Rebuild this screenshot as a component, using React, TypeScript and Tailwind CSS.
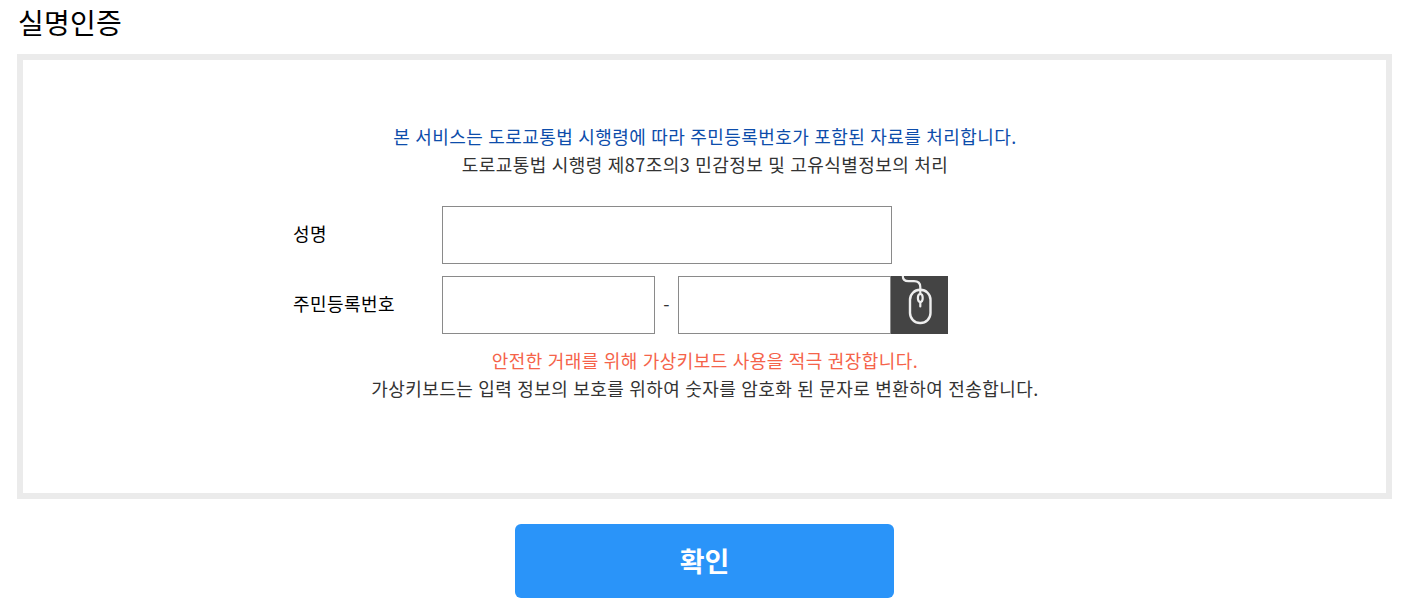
const inputClass = "h-[58px] border border-[#8a8a8a] bg-white px-3 outline-none";

function MouseIcon() {
  return (
    <svg width="57" height="58" viewBox="0 0 57 58" fill="none" stroke="#eee" strokeLinecap="round">
      <path d="M11.8 0C11.8 3.5 13.5 5.2 17.5 5.2H23C27.5 5.2 29.3 7 29.3 11V17" strokeWidth="2.2" />
      <rect x="19" y="13.8" width="20.5" height="33.2" rx="10" strokeWidth="2.4" />
      <ellipse cx="29.3" cy="22" rx="2.4" ry="4" strokeWidth="2.2" />
      <path d="M29.3 26V30.5" strokeWidth="2.2" />
    </svg>
  );
}

export default function App() {
  return (
    <main className="h-[609px] overflow-hidden bg-white pl-[17px] pr-[25px] font-['Noto_Sans_CJK_KR',sans-serif] text-[18px] leading-7 tracking-[0.44px] text-[#333] [word-spacing:0.55px]">
      <h1 className="h-[54px] pl-px pt-px text-[28px] leading-[42px] tracking-[0.25px] text-black">실명인증</h1>

      <section className="h-[445px] border-[6px] border-[#ebebeb] pt-[62px]">
        <div className="pl-px text-center">
          <p className="text-[#0d4dab]">본 서비스는 도로교통법 시행령에 따라 주민등록번호가 포함된 자료를 처리합니다.</p>
          <p>도로교통법 시행령 제87조의3 민감정보 및 고유식별정보의 처리</p>
        </div>

        <form className="ml-[270px] mt-7 flex flex-col gap-3">
          <div className="flex items-center">
            <label htmlFor="name" className="w-[149px] pb-1 text-black">성명</label>
            <input id="name" type="text" className={`${inputClass} w-[450px]`} />
          </div>
          <div className="flex items-center">
            <label htmlFor="idFront" className="w-[149px] pb-1 text-black">주민등록번호</label>
            <input id="idFront" type="text" className={`${inputClass} w-[213px]`} />
            <span className="w-[23px] pb-[5px] text-center">-</span>
            <input type="password" className={`${inputClass} w-[213px]`} />
            <button type="button" aria-label="가상키보드" className="h-[58px] w-[57px] bg-[#444]">
              <MouseIcon />
            </button>
          </div>
        </form>

        <div className="mt-3 pl-px text-center">
          <p className="text-[#f5634a]">안전한 거래를 위해 가상키보드 사용을 적극 권장합니다.</p>
          <p>가상키보드는 입력 정보의 보호를 위하여 숫자를 암호화 된 문자로 변환하여 전송합니다.</p>
        </div>
      </section>

      <button
        type="button"
        className="mx-auto mt-[25px] block h-[74px] w-[379px] rounded-md bg-[#2a94f9] pb-px text-[27px] font-bold tracking-normal text-white"
      >
        확인
      </button>
    </main>
  );
}
